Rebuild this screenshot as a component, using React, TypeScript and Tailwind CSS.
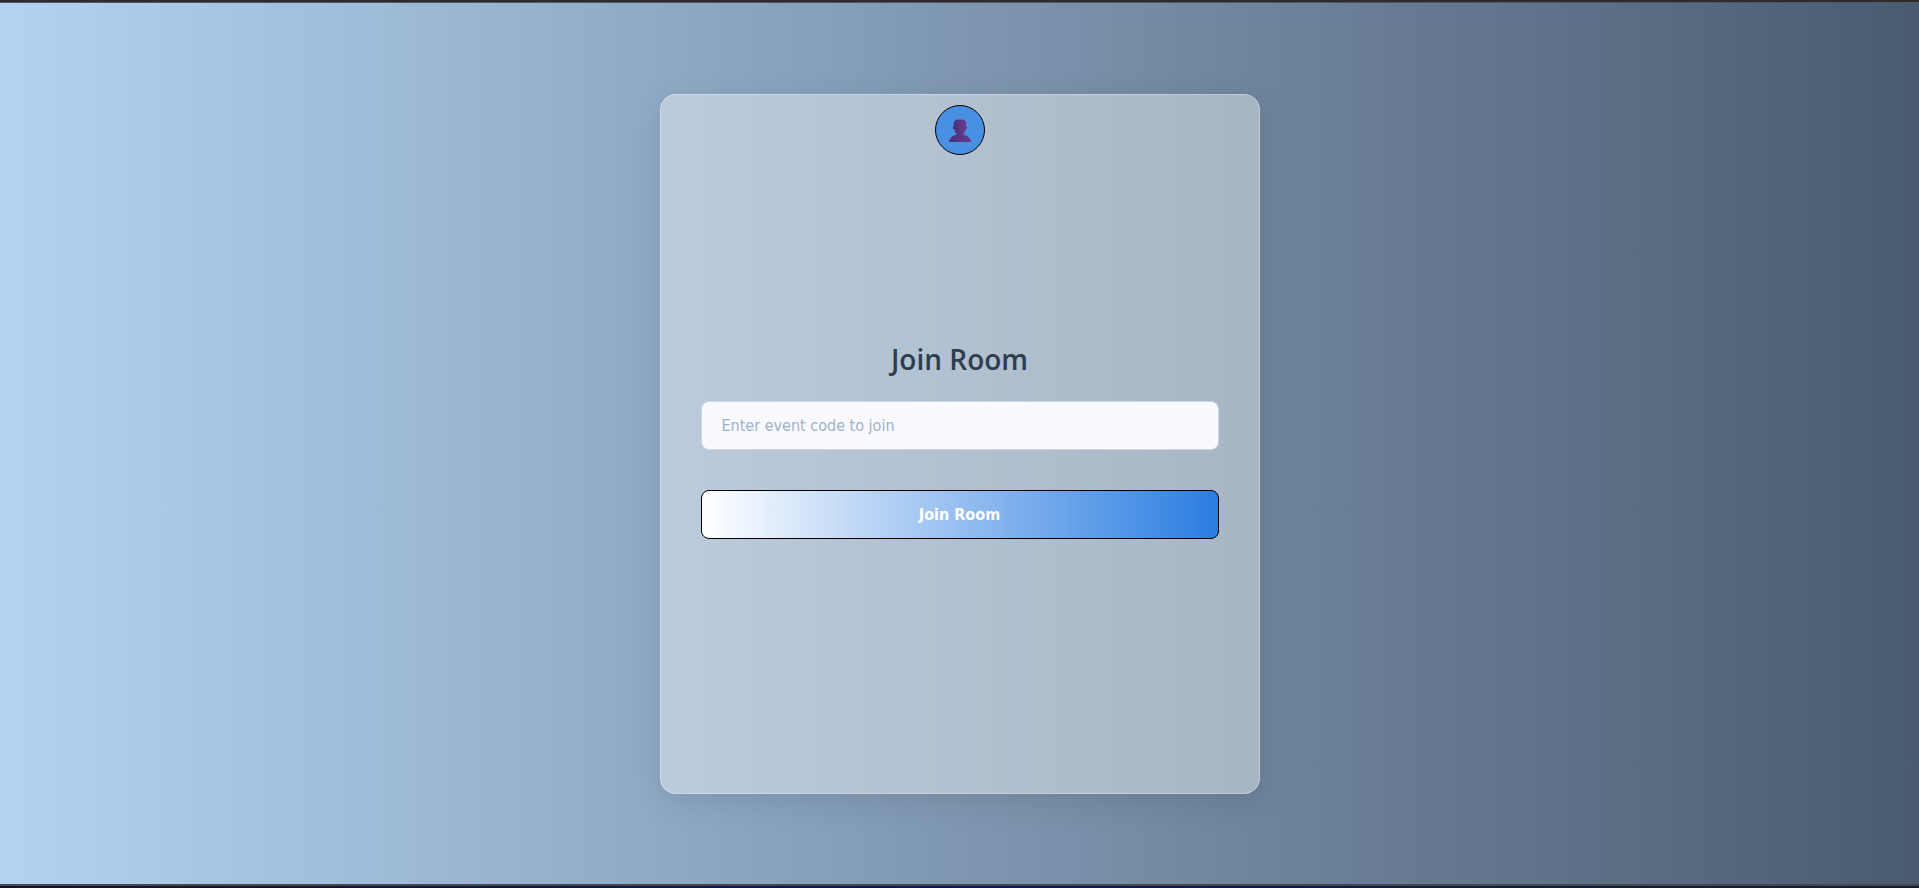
import { useState } from "react";

function Avatar() {
  return (
    <button
      type="button"
      aria-label="Profile"
      className="flex size-[50px] items-center justify-center rounded-full border border-black bg-[#4a90e2]"
    >
      <svg viewBox="0 0 24 24" className="size-6" aria-hidden="true">
        <defs>
          <linearGradient id="bust" x1="0" y1="0" x2="1" y2="0">
            <stop offset="0" stopColor="#46307a" />
            <stop offset="1" stopColor="#663a8c" />
          </linearGradient>
          <linearGradient id="face" x1="0" y1="0" x2="1" y2="0">
            <stop offset="0" stopColor="#4c2f74" />
            <stop offset="1" stopColor="#6a3c90" />
          </linearGradient>
        </defs>
        <path d="M.8 24.500C1 20.300 4.500 17.500 9 16.500h6c4.500 1 8 3.800 8.200 8z" fill="url(#bust)" />
        <path
          d="M5.800 5.500C5.800 2.500 8 1.500 12 1.500s6.200 1 6.200 4v2.700c1.200 0 1.200 3-.6 3.300-.4 2-1.200 3.200-2.300 4.200v1.800c-1.500 1.400-5.100 1.400-6.600 0v-1.800c-1.100-1-1.900-2.200-2.300-4.200-1.800-.3-1.800-3.300-.6-3.300z"
          fill="url(#face)"
        />
      </svg>
    </button>
  );
}

export default function App() {
  const [code, setCode] = useState("");

  return (
    <div className="flex min-h-screen flex-col bg-[#17182a]">
      <div className="h-[3px] border-b border-[#55565f] bg-[#2c2a33]" />
      <main className="flex grow items-center justify-center bg-linear-to-r/srgb from-[#b3d3f2] to-[#4a5b70] pt-px">
        <section className="flex min-h-[700px] w-full max-w-[600px] flex-col items-center rounded-2xl border border-white/30 bg-white/40 px-10 pt-2.5 shadow-[0_8px_32px_rgba(0,0,0,0.1)]">
          <Avatar />
          <form
            onSubmit={(event) => event.preventDefault()}
            className="mt-[182px] flex w-full flex-col"
          >
            <h1 className="mb-5 text-center font-['Open_Sans',sans-serif] text-[28px] leading-11 font-semibold text-[#2d3e4e]">
              Join Room
            </h1>
            <input
              type="text"
              aria-label="Event code"
              placeholder="Enter event code to join"
              value={code}
              onChange={(event) => setCode(event.target.value)}
              className="h-[49px] w-full rounded-lg border border-[#cbd5e4] bg-[#f8faff] px-5 font-['DejaVu_Sans_Condensed','Noto_Sans',sans-serif] text-base text-[#2d3e4e] placeholder:text-[#a0b2c8]"
            />
            <button
              type="submit"
              className="mt-10 h-[49px] w-full rounded-lg border border-[#000] bg-linear-to-r/srgb from-white to-[#2b7de1] font-['DejaVu_Sans_Condensed','Noto_Sans',sans-serif] text-base font-bold text-white"
            >
              Join Room
            </button>
          </form>
        </section>
      </main>
      <div className="h-1 border-t-2 border-[#46464f] bg-linear-to-r/srgb from-[#17161f] via-[#0b1a5c] to-[#17202a]" />
    </div>
  );
}
